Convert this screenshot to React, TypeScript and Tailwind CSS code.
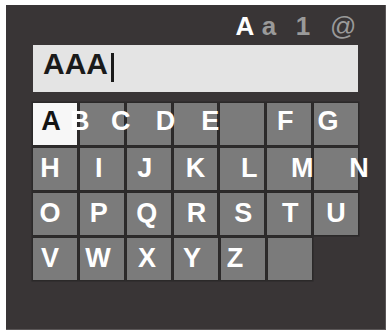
type Key = { l?: string; pos?: string; white?: boolean };

const rows: { keys: Key[]; dy: string }[] = [
  {
    dy: "-translate-y-[3px]",
    keys: [
      { l: "A", pos: "-translate-x-[4px]", white: true },
      { l: "B", pos: "-translate-x-[22px]" },
      { l: "C", pos: "-translate-x-[28px]" },
      { l: "D", pos: "-translate-x-[30px]" },
      { l: "E", pos: "-translate-x-[32px]" },
      { l: "F", pos: "-translate-x-[4px]" },
      { l: "G", pos: "-translate-x-[8px]" },
    ],
  },
  {
    dy: "-translate-y-[1px]",
    keys: [
      { l: "H", pos: "-translate-x-[5px]" },
      { l: "I", pos: "-translate-x-[3px]" },
      { l: "J", pos: "-translate-x-[4px]" },
      { l: "K", pos: "" },
      { l: "L", pos: "translate-x-[7px]" },
      { l: "M", pos: "translate-x-[13px]" },
      { l: "N", pos: "translate-x-[23px]" },
    ],
  },
  {
    dy: "-translate-y-[1px]",
    keys: [
      { l: "O", pos: "-translate-x-[5px]" },
      { l: "P", pos: "-translate-x-[3px]" },
      { l: "Q", pos: "-translate-x-[2px]" },
      { l: "R", pos: "translate-x-[1px]" },
      { l: "S", pos: "translate-x-[1px]" },
      { l: "T", pos: "translate-x-[1px]" },
      { l: "U", pos: "" },
    ],
  },
  {
    dy: "-translate-y-[1px]",
    keys: [
      { l: "V", pos: "-translate-x-[5px]" },
      { l: "W", pos: "-translate-x-[4px]" },
      { l: "X", pos: "-translate-x-[2px]" },
      { l: "Y", pos: "-translate-x-[4px]" },
      { l: "Z", pos: "-translate-x-[8px]" },
      {},
    ],
  },
];

function KeyCell({ k, dy }: { k: Key; dy: string }) {
  return (
    <div
      className={`w-[44px] h-[42px] flex items-center justify-center shadow-[0_0_0_1.5px_#2b2929] ${
        k.white ? "bg-[#f7f7f7]" : "bg-[#7b7b7b]"
      }`}
    >
      {k.l && (
        <span
          className={`relative z-10 text-[27px] font-bold leading-none ${k.pos} ${dy} ${
            k.white ? "text-[#141414]" : "text-white"
          }`}
        >
          {k.l}
        </span>
      )}
    </div>
  );
}

export default function App() {
  return (
    <div className="w-[387px] h-[332px] bg-white pt-[5px] pl-[6px] font-['Liberation_Sans',Arial,sans-serif]">
      <div className="w-[380px] h-[325px] bg-[#393536] border-r border-b border-[#5a5657] pt-[8px] px-[27px] flex flex-col">
        {/* mode tabs */}
        <div className="h-[32px] flex justify-end items-start pr-[4px] text-[26px] leading-none">
          <span className="w-[24px] text-center font-bold text-white">A</span>
          <span className="w-[24px] text-center font-bold text-[#9a9a9a]">a</span>
          <span className="w-[24px] ml-[10px] text-center font-bold text-[#9a9a9a]">1</span>
          <span className="w-[24px] ml-[15px] text-center text-[#9a9a9a]">@</span>
        </div>

        {/* text field */}
        <div className="h-[47px] bg-[#e4e4e4] flex items-start pt-[4px] pl-[10px]">
          <span className="text-[30px] font-bold leading-none text-[#1a1a1a]">AAA</span>
          <span className="mt-[4px] ml-[3px] w-[3px] h-[29px] bg-[#1a1a1a]" />
        </div>

        {/* keyboard */}
        <div className="mt-[11px] flex flex-col gap-[3px]">
          {rows.map((r, i) => (
            <div key={i} className="flex gap-[3px]">
              {r.keys.map((k, j) => (
                <KeyCell key={j} k={k} dy={r.dy} />
              ))}
            </div>
          ))}
        </div>
      </div>
    </div>
  );
}
